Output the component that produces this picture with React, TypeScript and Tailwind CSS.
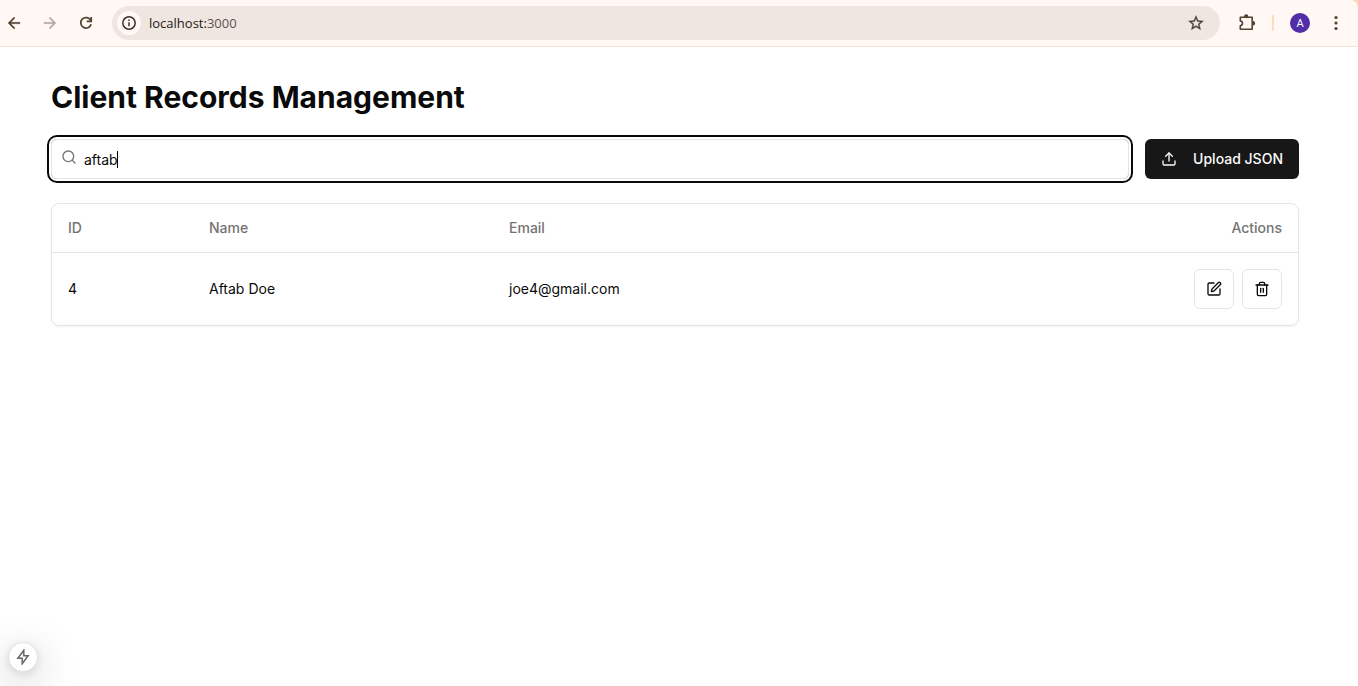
import { useState } from "react";
import { Search, SquarePen, Trash2, Upload } from "lucide-react";

type Client = { id: number; name: string; email: string };

const clients: Client[] = [{ id: 4, name: "Aftab Doe", email: "joe4@gmail.com" }];

function BrowserBar() {
  return (
    <div className="bg-[#ffd9b3]">
      <header className="flex h-[47px] items-center rounded-tr-lg border-b border-[#f6e0cf] bg-[#fff8f4] text-[#54422f]">
        <nav className="flex items-center gap-[18px] pl-[5px]">
          <button type="button" aria-label="Back">
            <svg viewBox="0 0 24 24" className="size-[18px]" fill="currentColor" stroke="currentColor" strokeWidth="0.4">
              <path d="M20 11H7.830l5.590-5.590L12 4l-8 8 8 8 1.410-1.410L7.830 13H20v-2z" />
            </svg>
          </button>
          <button type="button" aria-label="Forward" className="text-[#b3a9a3]">
            <svg viewBox="0 0 24 24" className="size-[18px]" fill="currentColor" stroke="currentColor" strokeWidth="0.4">
              <path d="M12 4l-1.410 1.410L16.170 11H4v2h12.170l-5.580 5.590L12 20l8-8z" />
            </svg>
          </button>
          <button type="button" aria-label="Reload">
            <svg viewBox="0 0 24 24" className="size-[18px]" fill="none" stroke="currentColor" strokeWidth="2.3">
              <path d="M18.3 8.600A7 7 0 1 0 18.800 13.600" />
              <path d="M19 4V9.800H13" />
            </svg>
          </button>
        </nav>
        <div className="ml-[17px] flex h-[34px] flex-1 items-center rounded-full bg-[#efe6e1] pr-[15px] pl-[5px]">
          <span className="flex size-6 items-center justify-center rounded-full bg-[#fff8f4] text-[#3b302a]">
            <svg viewBox="0 0 16 16" className="size-4" fill="none" stroke="currentColor" strokeWidth="1.5">
              <circle cx="8" cy="8" r="6.2" />
              <path d="M8 7.200v4M8 4.600v1.500" />
            </svg>
          </span>
          <span className="ml-2 flex-1 font-['Open_Sans',sans-serif] text-[13px] leading-5 text-[#211a15]">
            localhost:<span className="text-[#5d534d]">3000</span>
          </span>
          <button type="button" aria-label="Bookmark this tab" className="text-[#4a4039]">
            <svg viewBox="0 0 24 24" className="size-[18px]" fill="currentColor" stroke="currentColor" strokeWidth="0.4">
              <path d="M22 9.240l-7.190-.62L12 2 9.190 8.630 2 9.240l5.460 4.730L5.820 21 12 17.270 18.180 21l-1.630-7.030L22 9.240zM12 15.400l-3.760 2.270 1-4.280-3.320-2.880 4.380-.38L12 6.100l1.710 4.040 4.380.38-3.320 2.880 1 4.280L12 15.400z" />
            </svg>
          </button>
        </div>
        <div className="flex items-center pl-[17px]">
          <button type="button" aria-label="Extensions">
            <svg viewBox="0 0 20 20" className="size-5" fill="none" stroke="currentColor" strokeWidth="1.6" strokeLinejoin="round">
              <path d="M3.300 4.300H15.200V16.200H3.300V12.700C6.200 12.200 6.200 8.400 3.300 7.900z" />
              <path d="M7 4V3.400a2.200 2.200 0 0 1 4.400 0V4zM15.500 8h.5a2.200 2.200 0 0 1 0 4.400h-.5z" fill="currentColor" stroke="none" />
            </svg>
          </button>
          <span className="ml-[15px] h-4 w-0.5 rounded-full bg-[#ffdcb9]" />
          <button
            type="button"
            aria-label="Profile"
            className="ml-4 flex size-5 items-center justify-center rounded-full bg-[#512da8] font-[Roboto,sans-serif] text-[11px] leading-none text-white"
          >
            A
          </button>
          <button type="button" aria-label="Menu" className="mr-3 ml-4">
            <svg viewBox="0 0 20 20" className="size-5" fill="currentColor">
              <circle cx="10" cy="4.5" r="1.6" />
              <circle cx="10" cy="10" r="1.6" />
              <circle cx="10" cy="15.5" r="1.6" />
            </svg>
          </button>
        </div>
      </header>
    </div>
  );
}

export default function App() {
  const [query, setQuery] = useState("aftab");
  const rows = clients.filter((c) => c.name.toLowerCase().includes(query.toLowerCase()));

  return (
    <div className="min-h-screen bg-white font-[Inter,sans-serif] text-[#0a0a0a]">
      <BrowserBar />
      <main className="pr-2">
        <div className="mx-auto max-w-[1280px] px-4 py-8">
          <h1 className="mb-6 text-3xl font-bold">Client Records Management</h1>
          <div className="mb-6 flex items-center gap-4">
            <div className="relative flex-1">
              <Search className="absolute top-2.5 left-2.5 size-4 text-[#737373]" />
              <input
                type="text"
                aria-label="Search clients"
                value={query}
                onChange={(e) => setQuery(e.target.value)}
                className="block h-10 w-full rounded-md border border-[#e5e5e5] bg-transparent py-2 pr-3 pl-8 text-sm caret-transparent ring-2 ring-[#0a0a0a] ring-offset-2 outline-none"
              />
              {query === "aftab" && <span className="absolute top-3 left-[66px] h-[17px] w-px bg-black" />}
            </div>
            <button
              type="button"
              className="flex h-10 items-center gap-4 rounded-md bg-[#171717] px-4 text-sm font-medium text-[#fafafa]"
            >
              <Upload className="size-4" />
              Upload JSON
            </button>
          </div>
          <div className="rounded-lg border border-[#e5e5e5] shadow-xs">
            <table className="w-full table-fixed text-left text-sm">
              <thead>
                <tr className="h-12 border-b border-[#e5e5e5] text-[#737373]">
                  <th className="w-[141px] px-4 font-medium">ID</th>
                  <th className="w-[300px] px-4 font-medium">Name</th>
                  <th className="px-4 font-medium">Email</th>
                  <th className="px-4 text-right font-medium">Actions</th>
                </tr>
              </thead>
              <tbody>
                {rows.map((c) => (
                  <tr key={c.id}>
                    <td className="p-4">{c.id}</td>
                    <td className="p-4">{c.name}</td>
                    <td className="p-4">{c.email}</td>
                    <td className="p-4">
                      <div className="flex justify-end gap-2">
                        <button
                          type="button"
                          aria-label={`Edit ${c.name}`}
                          className="flex size-10 items-center justify-center rounded-md border border-[#e5e5e5]"
                        >
                          <SquarePen className="size-4" />
                        </button>
                        <button
                          type="button"
                          aria-label={`Delete ${c.name}`}
                          className="flex size-10 items-center justify-center rounded-md border border-[#e5e5e5]"
                        >
                          <Trash2 className="size-4" />
                        </button>
                      </div>
                    </td>
                  </tr>
                ))}
              </tbody>
            </table>
          </div>
        </div>
      </main>
      <button
        type="button"
        aria-label="Static route"
        className="fixed bottom-3.5 left-2 flex size-[30px] items-center justify-center rounded-full border border-[#e2e2e2] bg-white text-[#666666] shadow-[0_11px_40px_0_rgba(0,0,0,0.25),0_2px_10px_0_rgba(0,0,0,0.12)]"
      >
        <svg viewBox="0 0 16 16" className="size-4" fill="none" stroke="currentColor" strokeWidth="1.5">
          <path d="M8.800 1.200L2.900 9.200H7.200V14.800L13.100 6.800H8.800z" />
        </svg>
      </button>
    </div>
  );
}
